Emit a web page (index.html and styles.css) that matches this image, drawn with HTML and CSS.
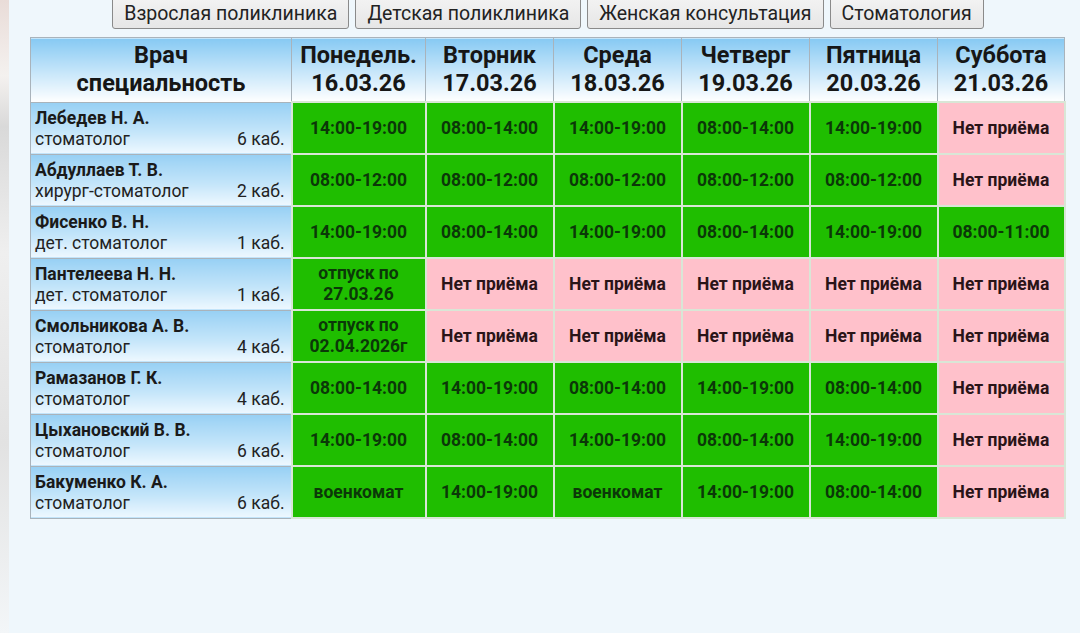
FILE: index.html
```html
<!DOCTYPE html>
<html lang="ru">
<head>
<meta charset="utf-8">
<title>Расписание</title>
<link rel="stylesheet" href="styles.css">
</head>
<body>
<div class="edge"></div>
<div class="page">
  <nav class="tabs">
    <button class="tab">Взрослая поликлиника</button>
    <button class="tab">Детская поликлиника</button>
    <button class="tab">Женская консультация</button>
    <button class="tab">Стоматология</button>
  </nav>
  <table class="sched">
    <colgroup>
      <col class="c-doc"><col class="c-mon"><col class="c-day"><col class="c-day"><col class="c-day"><col class="c-day"><col class="c-sat">
    </colgroup>
    <thead>
      <tr>
        <th>Врач<br>специальность</th>
        <th>Понедель.<br>16.03.26</th>
        <th>Вторник<br>17.03.26</th>
        <th>Среда<br>18.03.26</th>
        <th>Четверг<br>19.03.26</th>
        <th>Пятница<br>20.03.26</th>
        <th>Суббота<br>21.03.26</th>
      </tr>
    </thead>
    <tbody>
      <tr>
        <td class="doc"><b>Лебедев Н. А.</b><div class="spec"><span>стоматолог</span><span>6 каб.</span></div></td>
        <td class="on">14:00-19:00</td><td class="on">08:00-14:00</td><td class="on">14:00-19:00</td><td class="on">08:00-14:00</td><td class="on">14:00-19:00</td><td class="off">Нет приёма</td>
      </tr>
      <tr>
        <td class="doc"><b>Абдуллаев Т. В.</b><div class="spec"><span>хирург-стоматолог</span><span>2 каб.</span></div></td>
        <td class="on">08:00-12:00</td><td class="on">08:00-12:00</td><td class="on">08:00-12:00</td><td class="on">08:00-12:00</td><td class="on">08:00-12:00</td><td class="off">Нет приёма</td>
      </tr>
      <tr>
        <td class="doc"><b>Фисенко В. Н.</b><div class="spec"><span>дет. стоматолог</span><span>1 каб.</span></div></td>
        <td class="on">14:00-19:00</td><td class="on">08:00-14:00</td><td class="on">14:00-19:00</td><td class="on">08:00-14:00</td><td class="on">14:00-19:00</td><td class="on">08:00-11:00</td>
      </tr>
      <tr>
        <td class="doc"><b>Пантелеева Н. Н.</b><div class="spec"><span>дет. стоматолог</span><span>1 каб.</span></div></td>
        <td class="on">отпуск по<br>27.03.26</td><td class="off">Нет приёма</td><td class="off">Нет приёма</td><td class="off">Нет приёма</td><td class="off">Нет приёма</td><td class="off">Нет приёма</td>
      </tr>
      <tr>
        <td class="doc"><b>Смольникова А. В.</b><div class="spec"><span>стоматолог</span><span>4 каб.</span></div></td>
        <td class="on">отпуск по<br>02.04.2026г</td><td class="off">Нет приёма</td><td class="off">Нет приёма</td><td class="off">Нет приёма</td><td class="off">Нет приёма</td><td class="off">Нет приёма</td>
      </tr>
      <tr>
        <td class="doc"><b>Рамазанов Г. К.</b><div class="spec"><span>стоматолог</span><span>4 каб.</span></div></td>
        <td class="on">08:00-14:00</td><td class="on">14:00-19:00</td><td class="on">08:00-14:00</td><td class="on">14:00-19:00</td><td class="on">08:00-14:00</td><td class="off">Нет приёма</td>
      </tr>
      <tr>
        <td class="doc"><b>Цыхановский В. В.</b><div class="spec"><span>стоматолог</span><span>6 каб.</span></div></td>
        <td class="on">14:00-19:00</td><td class="on">08:00-14:00</td><td class="on">14:00-19:00</td><td class="on">08:00-14:00</td><td class="on">14:00-19:00</td><td class="off">Нет приёма</td>
      </tr>
      <tr>
        <td class="doc"><b>Бакуменко К. А.</b><div class="spec"><span>стоматолог</span><span>6 каб.</span></div></td>
        <td class="on">военкомат</td><td class="on">14:00-19:00</td><td class="on">военкомат</td><td class="on">14:00-19:00</td><td class="on">08:00-14:00</td><td class="off">Нет приёма</td>
      </tr>
    </tbody>
  </table>
</div>
</body>
</html>
```

FILE: styles.css
```css
html, body {
  margin: 0;
  padding: 0;
  height: 100%;
}
body {
  background: #eff7fc;
  font-family: Roboto, "Noto Sans", "Liberation Sans", sans-serif;
  color: #111;
  display: flex;
  overflow: hidden;
}
.edge {
  width: 9px;
  flex: none;
  background: linear-gradient(180deg, #e9dcd8 0%, #f4f1ef 12%, #d9d9d9 20%, #efefef 40%, #e2e2e2 70%, #f3f6f8 100%);
}
.page {
  flex: 1;
  padding-left: 21px;
  padding-right: 14px;
}
.tabs {
  display: flex;
  justify-content: center;
  gap: 6px;
  margin-top: -6px;
  margin-bottom: 8px;
}
.tab {
  font-family: Roboto, "Noto Sans", "Liberation Sans", sans-serif;
  font-size: 19.5px;
  color: #222;
  height: 35px;
  padding: 5px 11px 0;
  border: 1px solid #8a8a8a;
  border-radius: 3px;
  background: linear-gradient(#f4f4f4, #e6e6e6);
  line-height: 22px;
}
.sched {
  border-collapse: collapse;
  table-layout: fixed;
  width: 1035px;
}
.c-doc { width: 261px; }
.c-mon { width: 134px; }
.c-day { width: 128px; }
.c-sat { width: 127px; }
.sched th {
  height: 62px;
  padding: 0 0 1px;
  font-size: 23.5px;
  line-height: 28px;
  font-weight: 700;
  color: #161616;
  background: linear-gradient(180deg, #86c9f3 0%, #c9e7fa 55%, #ffffff 100%);
  border: 1px solid #a9b3bb;
  text-align: center;
  vertical-align: middle;
}
.sched td {
  height: 52px;
  padding: 0;
  border: 2px solid #d9e6d6;
  box-sizing: border-box;
  text-align: center;
  vertical-align: middle;
  font-size: 17.5px;
  font-weight: 700;
  line-height: 21px;
}
.sched td.doc {
  text-align: left;
  padding: 5px 6px 0 4px;
  vertical-align: top;
  background: linear-gradient(180deg, #97d0f4 0%, #c6e6fa 60%, #eef8ff 100%);
  border: 1px solid #a9b3bb;
  color: #1a1a1a;
}
.doc b {
  display: block;
  font-weight: 700;
}
.spec {
  display: flex;
  justify-content: space-between;
  font-weight: 400;
  color: #222;
}
.on {
  background: #1fbe00;
  color: #0b3808;
}
.off {
  background: #ffc1cb;
  color: #2a1418;
}
```
